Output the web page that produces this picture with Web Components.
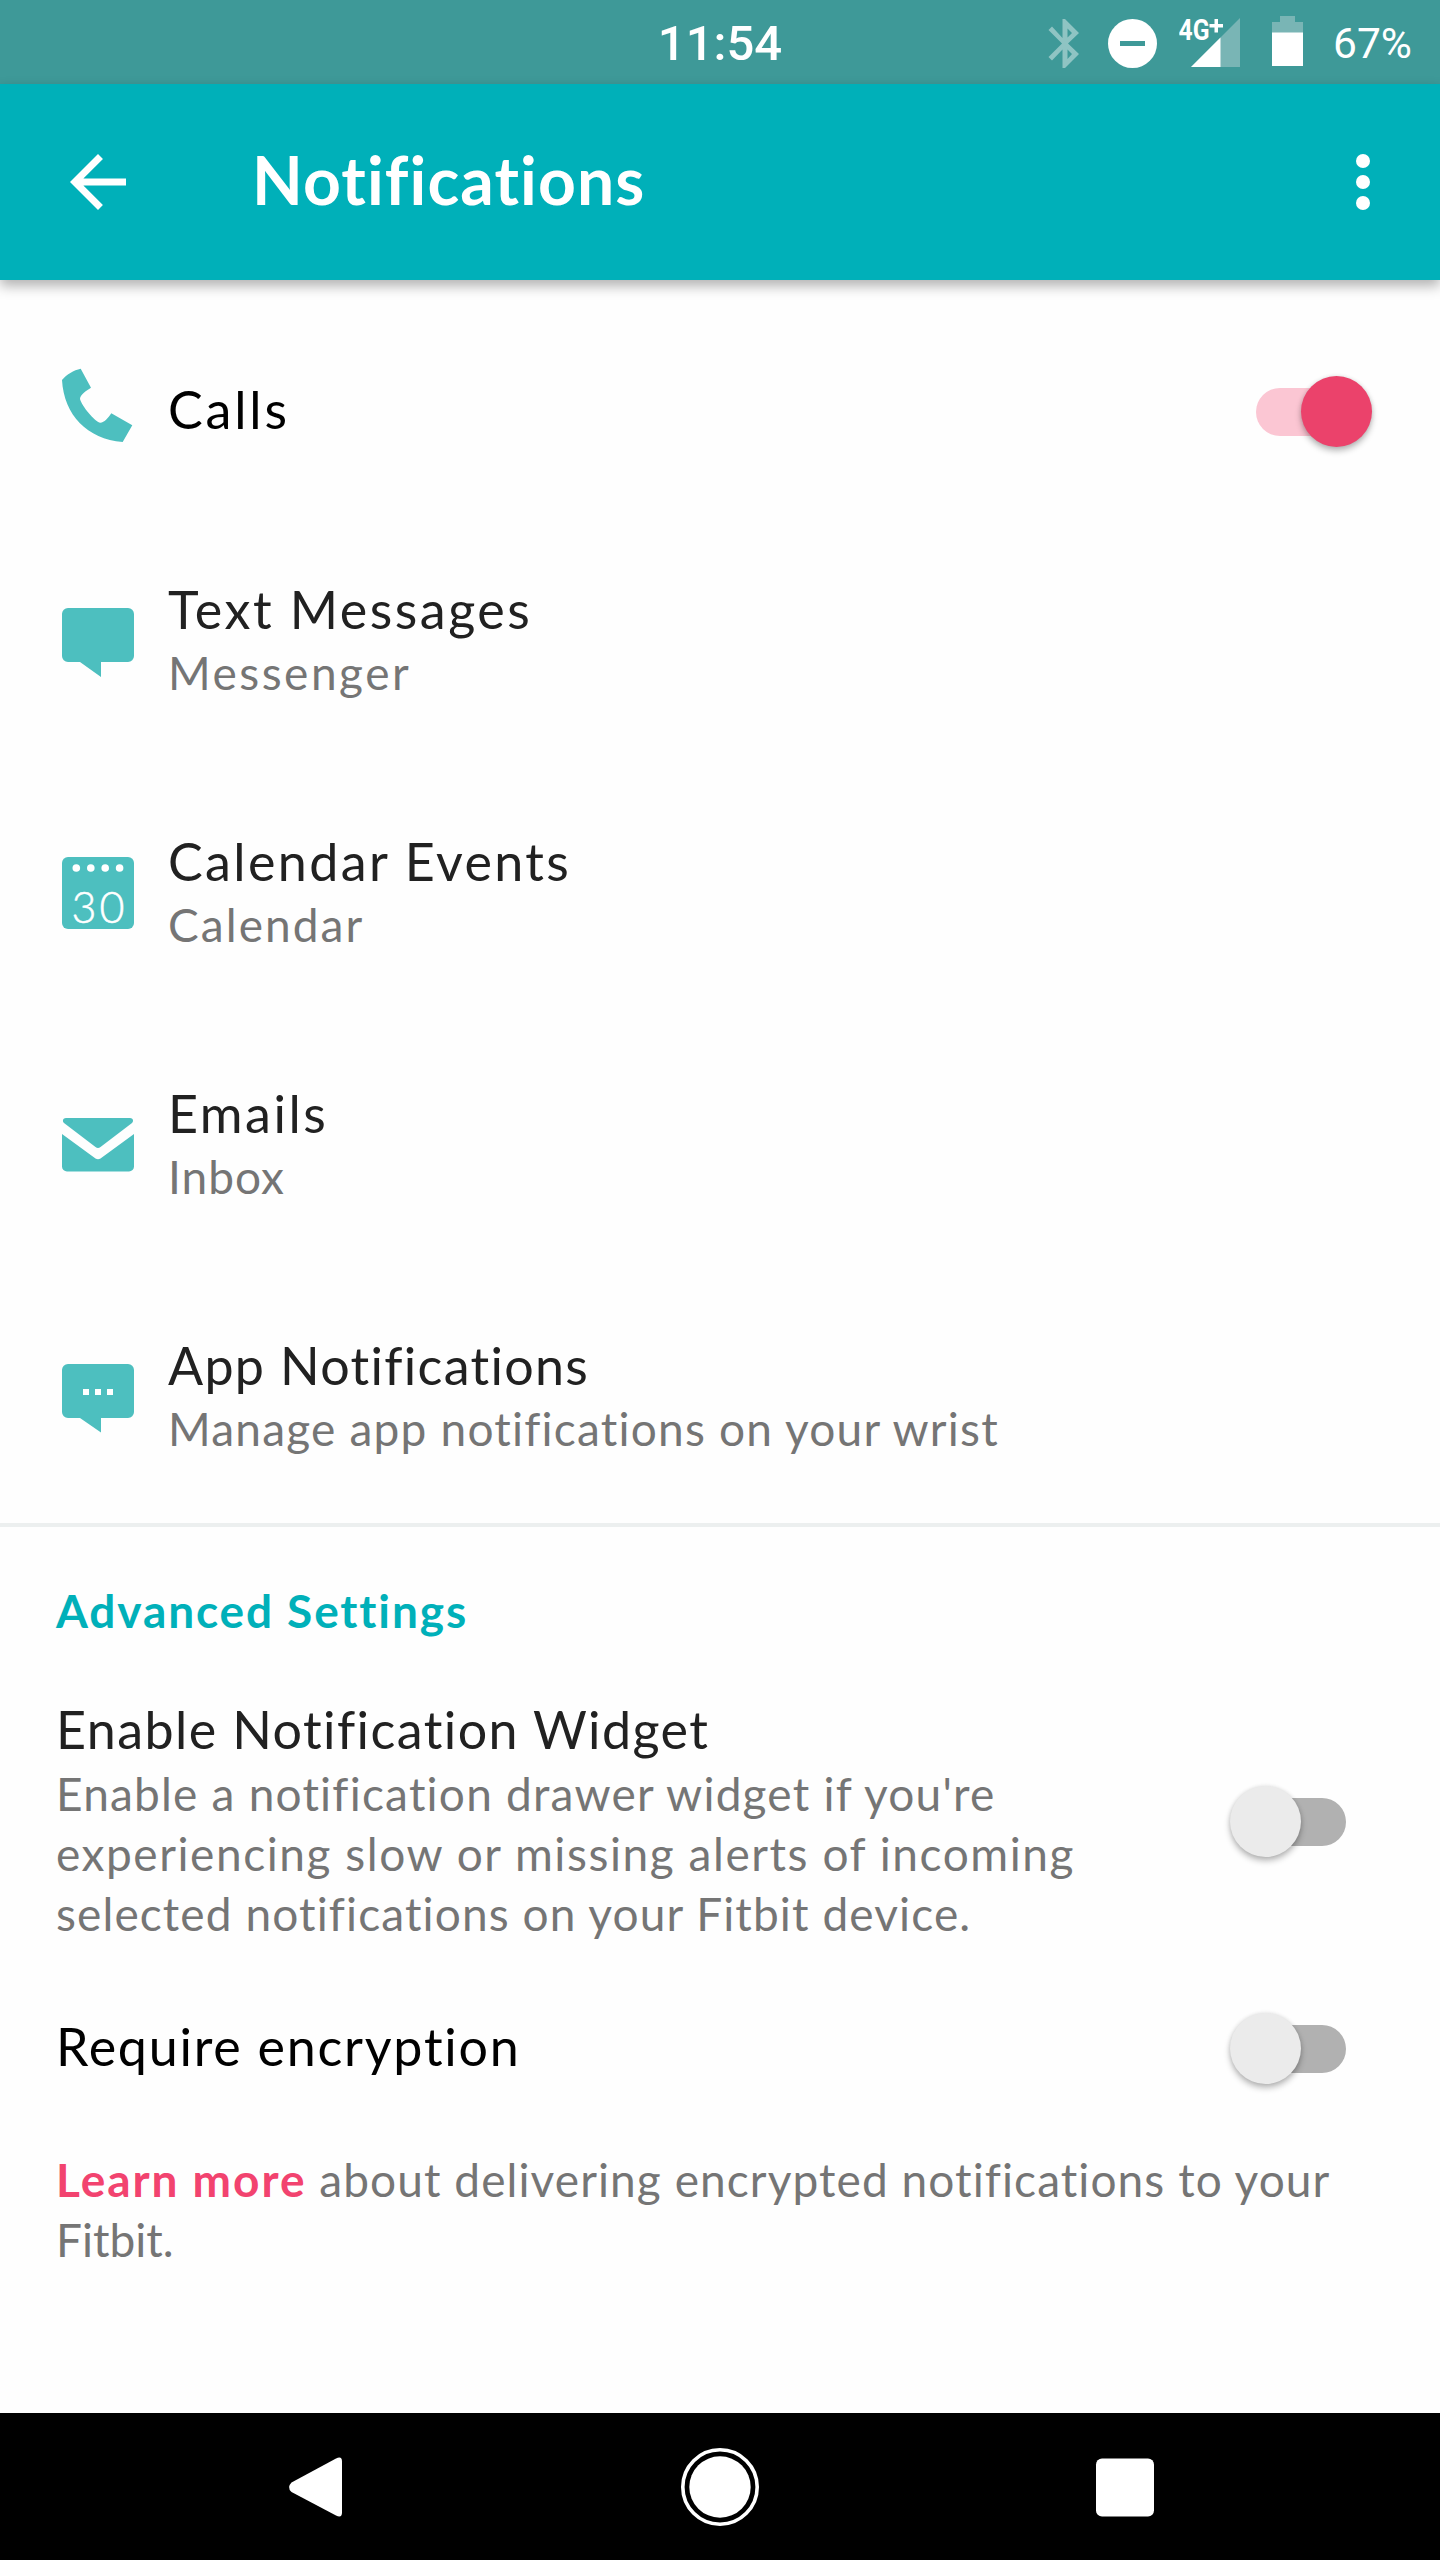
<!DOCTYPE html>
<html lang="en">
<head>
    <meta charset="UTF-8">
    <title>Notifications</title>
    <style>
        body {
            margin: 0;
            background: #fefefe;
            font-family: Lato, "Open Sans", sans-serif;
        }
    </style>
</head>
<body>
    <notifications-screen></notifications-screen>

    <script>
        class StatusBar extends HTMLElement {
            constructor() {
                super();
                this.attachShadow({ mode: 'open' }).innerHTML = `
                <style>
                    :host {
                        display: grid;
                        grid-template-columns: 1fr auto 1fr;
                        align-items: center;
                        height: 84px;
                        background: #3e9998;
                        color: #fff;
                        font-family: Roboto, sans-serif;
                    }
                    svg {
                        display: block;
                        height: 84px;
                        fill: #fff;
                    }
                    .time {
                        grid-column: 2;
                        font-size: 49px;
                        font-weight: 500;
                        line-height: 88px;
                    }
                    .status {
                        display: flex;
                        justify-content: flex-end;
                        padding-right: 28px;
                    }
                    .bluetooth { margin-right: 28px; }
                    .dnd { margin-right: 22px; }
                    .signal { margin-right: 32px; }
                    .battery { margin-right: 30px; }
                    .percent {
                        font-size: 42.5px;
                        line-height: 86px;
                    }
                </style>
                <div class="time">11:54</div>
                <div class="status">
                    <svg class="bluetooth" width="32" viewBox="0 0 32 84">
                        <path fill-opacity=".42" fill-rule="evenodd" d="M31 32L17 18H14.500V37L4 25.500L.5 29L14 42.500L.5 56L4 59.500L14.500 48.500V67H17L31 53L20 42.500ZM19.500 27.500L24 32L19.500 36.500ZM19.500 48.500L24 53L19.500 58Z"/>
                    </svg>
                    <svg class="dnd" width="49" viewBox="0 0 49 84">
                        <circle cx="24.500" cy="42.500" r="24.500"/>
                        <path fill="#3e9998" d="M12 40h25v5H12z"/>
                    </svg>
                    <svg class="signal" width="61" viewBox="0 0 61 84">
                        <path fill="#79b5b5" d="M61 17v49H12z"/>
                        <path d="M41.500 36.500V66H12z"/>
                        <text x="-.5" y="38.500" font-size="29.500" font-weight="700" textLength="31" lengthAdjust="spacingAndGlyphs">4G</text>
                        <path d="M35.500 18h3.500v5h5v3.500h-5v5h-3.500v-5h-5V23h5z"/>
                    </svg>
                    <svg class="battery" width="31" viewBox="0 0 31 84">
                        <path fill="#79b5b5" d="M8 15h15v6h8v11H0V21h8z"/>
                        <path d="M0 31.500h31V65H0z"/>
                    </svg>
                    <div class="percent">67%</div>
                </div>
                `;
            }
        }
        customElements.define('status-bar', StatusBar);

        class AppBar extends HTMLElement {
            constructor() {
                super();
                this.attachShadow({ mode: 'open' }).innerHTML = `
                <style>
                    :host {
                        display: flex;
                        align-items: center;
                        box-sizing: border-box;
                        height: 196px;
                        padding: 0 35px 0 56px;
                        background: #00b0b9;
                        box-shadow: 0 6px 12px rgba(0, 0, 0, .3);
                        color: #fff;
                    }
                    svg {
                        display: block;
                        flex: none;
                        fill: #fff;
                    }
                    h1 {
                        flex: 1;
                        margin: 0 0 0 112px;
                        font-size: 66px;
                        font-weight: 700;
                        line-height: 76px;
                        padding-bottom: 5px;
                        letter-spacing: 1.1px;
                    }
                </style>
                <svg width="84" height="84" viewBox="0 0 24 24"><path d="M20 11H7.830l5.590-5.590L12 4l-8 8 8 8 1.410-1.410L7.830 13H20v-2z"/></svg>
                <h1><slot></slot></h1>
                <svg width="84" height="84" viewBox="0 0 84 84">
                    <circle cx="42" cy="21" r="7"/>
                    <circle cx="42" cy="42" r="7"/>
                    <circle cx="42" cy="63" r="7"/>
                </svg>
                `;
            }
        }
        customElements.define('app-bar', AppBar);

        class ToggleSwitch extends HTMLElement {
            constructor() {
                super();
                this.attachShadow({ mode: 'open' }).innerHTML = `
                <style>
                    :host {
                        display: flex;
                        align-items: center;
                        flex: none;
                        width: 117px;
                        height: 71px;
                    }
                    .track {
                        display: flex;
                        align-items: center;
                        width: 96px;
                        height: 48px;
                        margin-left: 21px;
                        border-radius: 24px;
                        background: #b1b1b1;
                    }
                    .thumb {
                        width: 71px;
                        height: 71px;
                        flex: none;
                        margin-left: -20px;
                        border-radius: 50%;
                        background: #ebebeb;
                        box-shadow: 0 4px 6px rgba(0, 0, 0, .27), 0 0 4px rgba(0, 0, 0, .1);
                    }
                    :host([checked]) .track {
                        margin-left: 1px;
                        background: #fbc6d3;
                    }
                    :host([checked]) .thumb {
                        margin-left: 45px;
                        background: #eb426b;
                    }
                </style>
                <div class="track"><div class="thumb"></div></div>
                `;
            }
        }
        customElements.define('toggle-switch', ToggleSwitch);

        const icons = {
            phone: '<path d="M0 5C4 0 12-5 18.700-6.300L29 12.700C24 15.500 18 20 18 24C20 31 32 46 38 47.700C42 48 46 43 49.300 38.300L70.300 50.300L60.700 67C25 64 2 40 0 5Z"/>',
            message: '<path d="M6 3h60a6 6 0 0 1 6 6v42a6 6 0 0 1-6 6H39v15L18 57H6a6 6 0 0 1-6-6V9a6 6 0 0 1 6-6z"/>',
            calendar: `<rect width="72" height="72" rx="6"/>
                <g fill="#fff"><circle cx="14.300" cy="11" r="3.800"/><circle cx="28.800" cy="11" r="3.800"/><circle cx="43.200" cy="11" r="3.800"/><circle cx="57.600" cy="11" r="3.800"/>
                <text x="9.500" y="66" font-size="43" font-weight="300" stroke="#fff" stroke-width=".5" textLength="53">30</text></g>`,
            email: `<path d="M4 9h64c3 0 4 3 2 5L38.500 38q-2.500 2-5 0L2 14C0 12 1 9 4 9z"/>
                <path d="M0 25l33.500 24.500q2.500 1.500 5 0L72 25v32.500a5 5 0 0 1-5 5H5a5 5 0 0 1-5-5z"/>`,
            app: `<path d="M6 3h60a6 6 0 0 1 6 6v42a6 6 0 0 1-6 6H39v14.500L18 57H6a6 6 0 0 1-6-6V9a6 6 0 0 1 6-6z"/>
                <path fill="#fff" d="M21 28h6v6h-6zM33 28h6v6h-6zM45 28h6v6h-6z"/>`
        };

        class SettingIcon extends HTMLElement {
            connectedCallback() {
                this.attachShadow({ mode: 'open' }).innerHTML = `
                <style>
                    :host {
                        display: block;
                        width: 72px;
                        height: 72px;
                        padding-top: 4px;
                    }
                    svg {
                        display: block;
                        overflow: visible;
                        fill: #4dbfbf;
                    }
                </style>
                <svg width="72" height="72" viewBox="0 0 72 72">${icons[this.getAttribute('name')]}</svg>
                `;
            }
        }
        customElements.define('setting-icon', SettingIcon);

        class SettingItem extends HTMLElement {
            constructor() {
                super();
                this.attachShadow({ mode: 'open' }).innerHTML = `
                <style>
                    :host {
                        display: flex;
                        align-items: center;
                        color: #212121;
                    }
                    .text {
                        flex: 1;
                        white-space: nowrap;
                    }
                    slot[name="title"] {
                        display: block;
                        font-size: 52px;
                        line-height: 66px;
                    }
                    slot[name="summary"] {
                        display: block;
                        margin: var(--summary-gap, 1px) 0 calc(-1 * var(--summary-gap, 1px));
                        color: #757575;
                        font-size: 46px;
                        line-height: 60px;
                    }
                    ::slotted([slot="icon"]) { margin-right: 34px; }
                </style>
                <slot name="icon"></slot>
                <div class="text">
                    <slot name="title"></slot>
                    <slot name="summary"></slot>
                </div>
                <slot name="control"></slot>
                `;
            }
        }
        customElements.define('setting-item', SettingItem);

        class NavBar extends HTMLElement {
            constructor() {
                super();
                this.attachShadow({ mode: 'open' }).innerHTML = `
                <style>
                    :host {
                        display: flex;
                        justify-content: space-between;
                        align-items: center;
                        box-sizing: border-box;
                        height: 147px;
                        padding: 0 275px;
                        background: #000;
                    }
                    svg {
                        display: block;
                        fill: #fff;
                    }
                </style>
                <svg width="80" height="80" viewBox="0 0 80 80"><path d="M16.500 35.500L61 11.500q6-3 6 3v51q0 6-6 3L16.500 45q-5-4.500 0-9.500z"/></svg>
                <svg width="80" height="80" viewBox="0 0 80 80">
                    <circle cx="40" cy="40" r="30.700"/>
                    <circle cx="40" cy="40" r="37.200" fill="none" stroke="#fff" stroke-width="3.600"/>
                </svg>
                <svg width="80" height="80" viewBox="0 0 80 80"><rect x="11" y="11.500" width="58" height="58" rx="6"/></svg>
                `;
            }
        }
        customElements.define('nav-bar', NavBar);

        class NotificationsScreen extends HTMLElement {
            constructor() {
                super();
                this.attachShadow({ mode: 'open' }).innerHTML = `
                <style>
                    :host {
                        display: flex;
                        flex-direction: column;
                        height: 2560px;
                        overflow: hidden;
                    }
                    main { flex: 1; }
                    .list {
                        padding: 24px 68px 2px 62px;
                        border-bottom: 4px solid #ecefef;
                    }
                    .list setting-item { height: 252px; }
                    .list setting-item.single {
                        height: 209px;
                        color: #000;
                    }
                    .single toggle-switch { margin-top: 6px; }
                    .advanced { padding: 54px 94px 0 56px; }
                    h2 {
                        margin: 0 0 55px;
                        color: #00b0b9;
                        font-size: 46px;
                        font-weight: 700;
                        line-height: 60px;
                        letter-spacing: 1.88px;
                    }
                    .widget { --summary-gap: 2px; }
                    .widget toggle-switch { margin-top: 5px; }
                    .encryption {
                        margin-top: 68px;
                        color: #000;
                    }
                    .encryption toggle-switch { margin: 3px 0 -2px; }
                    .line { display: block; }
                    p {
                        margin: 68px 0 0;
                        color: #757575;
                        font-size: 46px;
                        line-height: 60px;
                        white-space: nowrap;
                    }
                    a {
                        color: #f2436f;
                        font-weight: 700;
                        letter-spacing: 1.95px;
                    }
                </style>
                <status-bar></status-bar>
                <app-bar>Notifications</app-bar>
                <main>
                    <div class="list">
                        <setting-item class="single">
                            <setting-icon slot="icon" name="phone"></setting-icon>
                            <span slot="title" style="letter-spacing: 2.83px">Calls</span>
                            <toggle-switch slot="control" checked></toggle-switch>
                        </setting-item>
                        <setting-item>
                            <setting-icon slot="icon" name="message"></setting-icon>
                            <span slot="title" style="letter-spacing: 2.5px">Text Messages</span>
                            <span slot="summary" style="letter-spacing: 2.5px">Messenger</span>
                        </setting-item>
                        <setting-item>
                            <setting-icon slot="icon" name="calendar"></setting-icon>
                            <span slot="title" style="letter-spacing: 2.37px">Calendar Events</span>
                            <span slot="summary" style="letter-spacing: 2.06px">Calendar</span>
                        </setting-item>
                        <setting-item>
                            <setting-icon slot="icon" name="email"></setting-icon>
                            <span slot="title" style="letter-spacing: 2.5px">Emails</span>
                            <span slot="summary" style="letter-spacing: .99px">Inbox</span>
                        </setting-item>
                        <setting-item>
                            <setting-icon slot="icon" name="app"></setting-icon>
                            <span slot="title" style="letter-spacing: 1.31px">App Notifications</span>
                            <span slot="summary" style="letter-spacing: 1.21px">Manage app notifications on your wrist</span>
                        </setting-item>
                    </div>
                    <div class="advanced">
                        <h2>Advanced Settings</h2>
                        <setting-item class="widget">
                            <span slot="title" style="letter-spacing: 1.42px">Enable Notification Widget</span>
                            <span slot="summary">
                                <span class="line" style="letter-spacing: 1.21px">Enable a notification drawer widget if you're</span>
                                <span class="line" style="letter-spacing: 1.56px">experiencing slow or missing alerts of incoming</span>
                                <span class="line" style="letter-spacing: 1.11px">selected notifications on your Fitbit device.</span>
                            </span>
                            <toggle-switch slot="control"></toggle-switch>
                        </setting-item>
                        <setting-item class="encryption">
                            <span slot="title" style="letter-spacing: 1.75px">Require encryption</span>
                            <toggle-switch slot="control"></toggle-switch>
                        </setting-item>
                        <p>
                            <span class="line" style="letter-spacing: 1.08px"><a>Learn more</a> about delivering encrypted notifications to your</span>
                            <span class="line">Fitbit.</span>
                        </p>
                    </div>
                </main>
                <nav-bar></nav-bar>
                `;
            }
        }
        customElements.define('notifications-screen', NotificationsScreen);
    </script>
</body>
</html>
